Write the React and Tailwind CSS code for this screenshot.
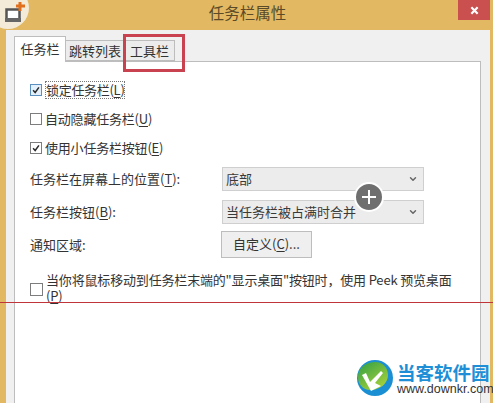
import { ChevronDown } from 'lucide-react'

const font = { fontFamily: '"Noto Sans CJK SC", "Noto Sans", sans-serif' }

function Check({ checked, className = 'border-[#7d7d7d] bg-white' }) {
  return (
    <span className={`flex h-[12px] w-[12px] shrink-0 items-center justify-center border ${className}`}>
      {checked && (
        <svg viewBox="0 0 12 12" className="h-[12px] w-[12px]">
          <path d="M2.5 6.2 L5 9 L9.5 2.8" fill="none" stroke="#2a2a2a" strokeWidth="1.8" />
        </svg>
      )}
    </span>
  )
}

function Mnemonic({ children }) {
  return <span className="underline underline-offset-2">{children}</span>
}

function Select({ children }) {
  return (
    <div className="flex h-[24px] w-[202px] items-center justify-between border border-[#cfcfcf] bg-[#ececec] pl-[3px] pr-[5px] text-[13px] text-[#3a3a3a]">
      <span className="pb-px">{children}</span>
      <ChevronDown size={10} strokeWidth={3.5} className="text-[#666]" />
    </div>
  )
}

function Logo() {
  return (
    <div className="absolute left-[357px] top-[360px] flex items-center gap-[4px]">
      <svg viewBox="0 0 36 36" className="h-[36px] w-[36px]">
        <defs>
          <linearGradient id="leaf" x1="0" y1="0" x2="0.7" y2="1">
            <stop offset="0" stopColor="#2f9e44" />
            <stop offset="1" stopColor="#a6d13a" />
          </linearGradient>
        </defs>
        <circle cx="18" cy="18" r="18" fill="#1b8fd3" />
        <path d="M1 17 C1 7 10 2 18 2 C26 2 31 8 31 15 C31 23 24 29 15 30 C7 31 1 25 1 17 Z" fill="url(#leaf)" />
        <path d="M33 14 C33 24 26 31 15 32 L22 35 C30 32 36 24 35 15 Z" fill="#1b8fd3" />
        <path d="M5 15 L9 13 L13 22 L24 11 L26 13 L18 23 L24 26 L14 31 Z" fill="#fff" />
      </svg>
      <div className="flex w-[96px] flex-col">
        <span className="whitespace-nowrap text-[18.5px] font-bold leading-[22px] text-[#1e8fd6]">当客软件园</span>
        <span className="whitespace-nowrap text-[12.5px] leading-[13px] text-[#333]" style={{ fontFamily: '"Liberation Sans", sans-serif' }}>www.downkr.com</span>
      </div>
    </div>
  )
}

export default function App() {
  return (
    <div className="relative h-[403px] w-[493px] overflow-hidden bg-[#e2b862] text-[#333]" style={font}>
      {/* title bar */}
      <div className="relative flex h-[30px] justify-center pl-[2px] text-[15.5px] leading-[24px] text-[#5a4a28]">
        <span>任务栏属性</span>
        <div className="absolute right-[3px] top-0 flex h-[20px] w-[32px] items-center justify-center bg-[#c9504f]">
          <svg viewBox="0 0 10 10" className="h-[9px] w-[9px]">
            <path d="M1.5 1.5 L8.5 8.5 M8.5 1.5 L1.5 8.5" stroke="#fff" strokeWidth="2.4" />
          </svg>
        </div>
      </div>

      {/* dialog body */}
      <div className="ml-[6px] mr-[3px] h-[373px] bg-[#f0f0f0] pl-[8px] pr-[9px] pt-[6px]">
        <div className="flex h-[25px] items-end">
          <div className="relative z-10 -mb-px flex h-[26px] w-[52px] items-center justify-center border border-b-0 border-[#bdbdbd] bg-white pb-[2px] text-[13px]">任务栏</div>
          <div className="flex h-[21px] w-[59px] items-center justify-center border border-l-0 border-[#bdbdbd] bg-[#ececec] text-[13px]">跳转列表</div>
          <div className="flex h-[21px] w-[50px] items-center justify-center border border-l-0 border-[#bdbdbd] bg-[#ececec] text-[13px]">工具栏</div>
        </div>
        <div className="h-[400px] border border-[#bdbdbd] bg-white pl-[15px] pr-[8px] pt-[20px] text-[13px] leading-[16px]">
          <div className="flex h-[16px] items-center gap-[3px]">
            <Check checked className="border-[#5a8fc0] bg-[#e4f0fb]" />
            <span className="border border-dotted border-[#777] tracking-[-0.3px]">锁定任务栏(<Mnemonic>L</Mnemonic>)</span>
          </div>
          <div className="mt-[13px] flex h-[16px] items-center gap-[3px]">
            <Check />
            <span className="tracking-[-0.2px]">自动隐藏任务栏(<Mnemonic>U</Mnemonic>)</span>
          </div>
          <div className="mt-[13px] flex h-[16px] items-center gap-[3px]">
            <Check checked />
            <span className="tracking-[-0.2px]">使用小任务栏按钮(<Mnemonic>E</Mnemonic>)</span>
          </div>

          <div className="mt-[11px] flex h-[24px] items-center">
            <span className="w-[192px]">任务栏在屏幕上的位置(<Mnemonic>T</Mnemonic>):</span>
            <Select>底部</Select>
          </div>
          <div className="mt-[9px] flex h-[24px] items-center">
            <span className="w-[192px]">任务栏按钮(<Mnemonic>B</Mnemonic>):</span>
            <Select>当任务栏被占满时合并</Select>
          </div>
          <div className="mt-[7px] flex h-[27px] items-center">
            <span className="w-[191px]">通知区域:</span>
            <div className="flex h-[27px] w-[91px] items-center justify-center border border-[#bdbdbd] bg-[#efefef] pb-px">
              <span>自定义(<Mnemonic>C</Mnemonic>)...</span>
            </div>
          </div>

          <div className="mt-[14px] flex items-center gap-[3px]">
            <Check className="mt-[2px] h-[13px] w-[13px] border-[#7d7d7d] bg-white" />
            <span className="tracking-[-0.17px]">当你将鼠标移动到任务栏末端的"显示桌面"按钮时，使用 Peek 预览桌面<br />(<Mnemonic>P</Mnemonic>)</span>
          </div>
        </div>
      </div>

      {/* app icon badge */}
      <div className="absolute -left-[13px] -top-[13px] h-[42px] w-[42px] rounded-full bg-[#f3ead8]" />
      <svg viewBox="0 0 24 24" className="absolute left-[3px] top-0 h-[24px] w-[24px]">
        <rect x="3.5" y="9.5" width="13" height="11" fill="#fff" stroke="#555" strokeWidth="2.5" />
        <rect x="2" y="18" width="16" height="4" fill="#666" />
        <path d="M17 2 V11 M13 6 H22" stroke="#e0701e" strokeWidth="3" />
      </svg>

      {/* annotation over the screenshot */}
      <div className="absolute left-[123px] top-[34px] h-[38px] w-[62px] border-[3px] border-[#c8434f]" />
      <div className="absolute left-0 top-[302px] h-px w-full bg-[#c0353a]" />
      <div className="absolute left-[354px] top-[182px] flex h-[30px] w-[30px] items-center justify-center rounded-full border-2 border-white bg-[#6f6f6f]">
        <svg viewBox="0 0 16 16" className="h-[16px] w-[16px]">
          <path d="M8 1 V15 M1 8 H15" stroke="#fff" strokeWidth="2" />
        </svg>
      </div>
      <Logo />
    </div>
  )
}
